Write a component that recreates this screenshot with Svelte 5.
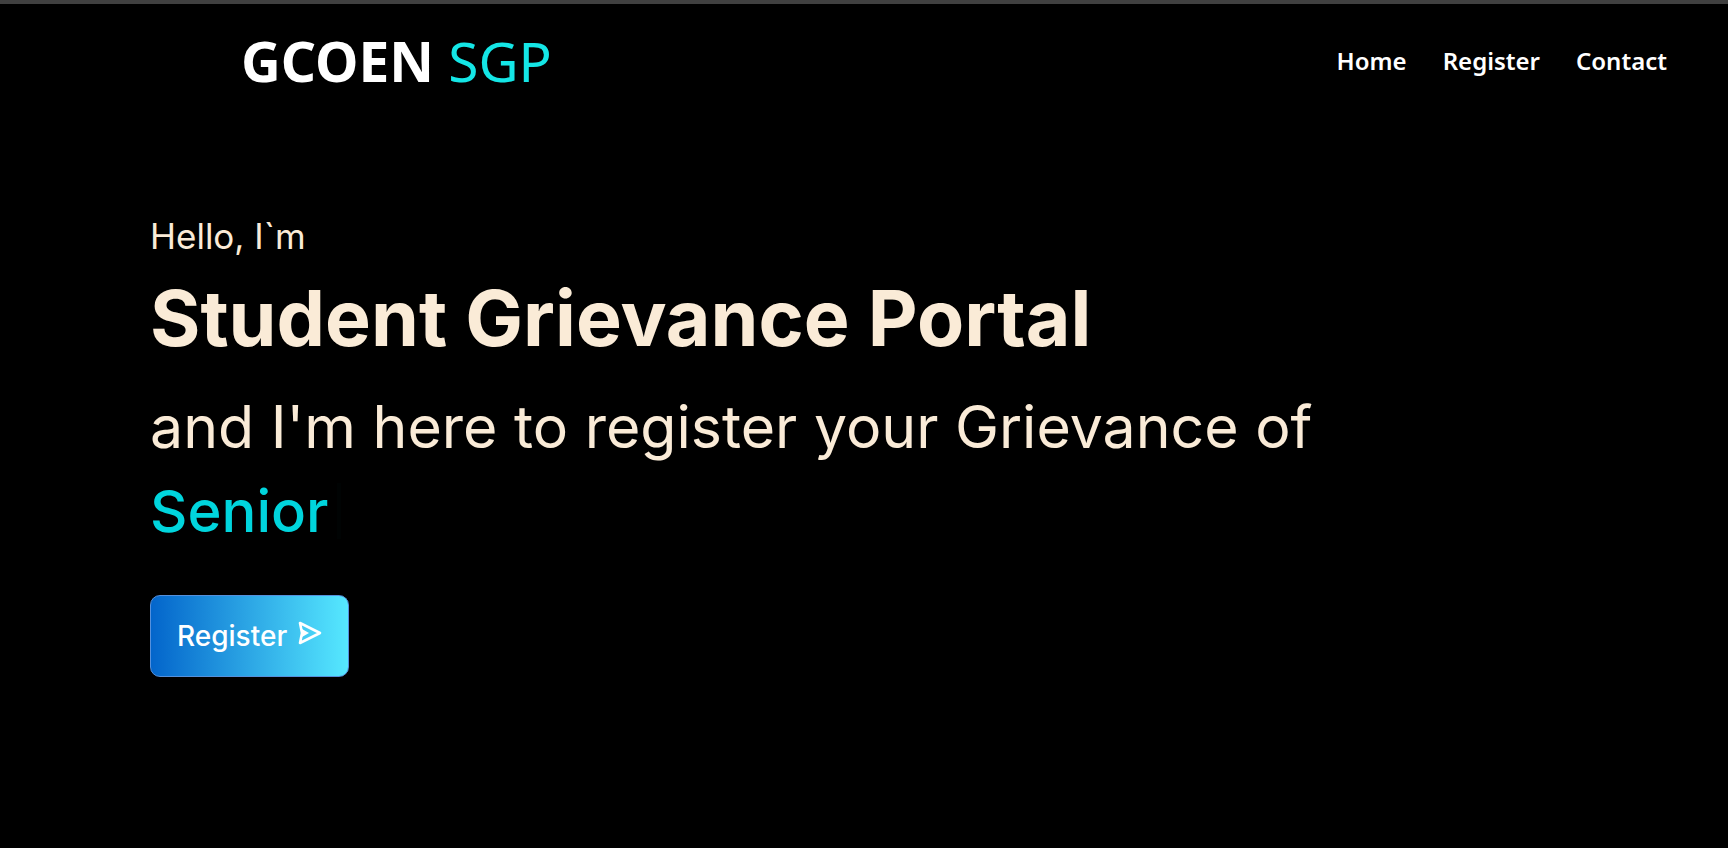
<script>
  const links = ['Home', 'Register', 'Contact'];
</script>

<div class="page">
  <header>
    <a class="logo" href="#home">GCOEN <span>SGP</span></a>
    <nav aria-label="Main">
      {#each links as link}
        <a href="#{link.toLowerCase()}">{link}</a>
      {/each}
    </nav>
  </header>

  <main>
    <p class="hello">Hello, I`m</p>
    <h1>Student Grievance Portal</h1>
    <p class="lead">and I'm here to register your Grievance of</p>
    <p class="typed"><span>Senior</span><i class="caret"></i></p>
    <button type="button">
      Register
      <svg viewBox="0 0 24 24" aria-hidden="true">
        <path d="M2 2 L22 12 L2 22 L4 12 Z" fill="none" stroke="currentColor" stroke-width="2.6" stroke-linejoin="round" />
        <path d="M4 8 L11 12 L4 16 Z" fill="currentColor" />
      </svg>
    </button>
  </main>
</div>

<style>
  :global(body) {
    margin: 0;
    background: #000;
  }

  .page {
    box-sizing: border-box;
    min-height: 100vh;
    border-top: 4px solid #404040;
    background: #000;
    color: #faebd7;
    font-family: Inter, 'Open Sans', sans-serif;
  }

  header {
    display: flex;
    align-items: center;
    justify-content: space-between;
    padding: 17px 61px 0 241px;
    font-family: 'Noto Sans', 'Open Sans', sans-serif;
  }

  a {
    color: #fff;
    text-decoration: none;
  }

  .logo {
    font-size: 55px;
    font-weight: 700;
    line-height: 80px;
  }

  .logo span {
    color: #14e6e6;
    font-weight: 400;
  }

  nav {
    display: flex;
    gap: 36px;
    font-size: 24px;
    font-weight: 600;
    line-height: 32px;
  }

  main {
    padding: 111px 150px 40px;
  }

  p,
  h1 {
    margin: 0;
  }

  .hello {
    font-size: 35px;
    line-height: 48px;
  }

  h1 {
    padding-top: 10px;
    font-size: 77px;
    font-weight: 700;
    line-height: 96px;
  }

  .lead {
    padding-top: 19px;
    font-size: 59px;
    line-height: 84px;
  }

  .typed {
    display: flex;
    align-items: center;
    gap: 8px;
    color: #00d5dd;
    font-size: 58px;
    font-weight: 500;
    line-height: 84px;
  }

  .caret {
    width: 4px;
    height: 56px;
    background: #000303;
  }

  button {
    display: flex;
    align-items: center;
    gap: 11px;
    margin-top: 42px;
    padding: 20px 26px;
    border: 1px solid #5590dc;
    border-radius: 10px;
    background: linear-gradient(90deg, #0365cb, #56e8ff);
    color: #fff;
    font: 500 28px/40px Inter, 'Open Sans', sans-serif;
  }

  svg {
    width: 24px;
    height: 24px;
    margin-bottom: 6px;
  }
</style>
